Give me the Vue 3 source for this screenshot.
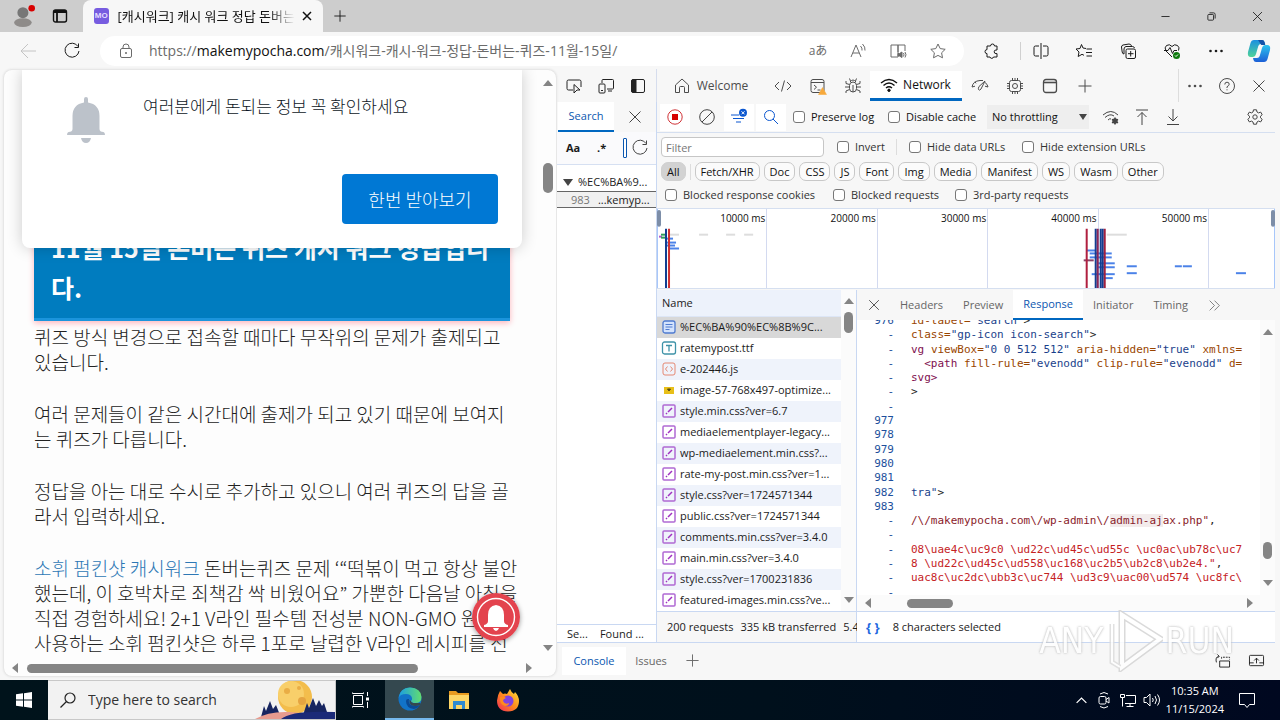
<script setup>
const icons = {
  back: '<path d="M16 8H1M8 1L1 8l7 7"/>',
  reload: '<path d="M14 3.5A7 7 0 1 0 15 8M14.500 .5v4h-4"/>',
  lock: '<rect x="2.500" y="5.500" width="11" height="9" rx="1.500"/><path d="M5 5.500V4a3 3 0 0 1 6 0v1.500"/><circle cx="8" cy="10" r=".6" fill="currentColor"/>',
  read: '<path d="M1 14L6 2l5 12M2.800 10h6.400M10.500 3q2 2 1.500 4.500M12.500 1q3 3 2.500 6.500"/>',
  book: '<path d="M8 2v12H1V2h7v7M8 2h7v6"/><path d="M8 10.500h1.500L12 9v5.500L9.500 13H8z" fill="currentColor"/><path d="M13.500 10q1 1.700 0 3.500M15 9q2 2.700 0 5.500"/>',
  star: '<path d="M8 1l2.200 4.600 5 .7-3.600 3.500.9 5L8 12.400l-4.500 2.400.9-5L.8 6.300l5-.7z"/>',
  puzzle: '<path d="M5 3h1.500a2 2 0 0 1 4 0H13v4h-1a1.800 1.800 0 0 0 0 3.600h1V14h-3.500a1.800 1.800 0 0 1-3.500 0H3v-3.400a2 2 0 0 1 0-4V3z"/>',
  split: '<path d="M8 0v16M6 3H2.500Q1 3 1 4.500v7Q1 13 2.500 13H6M10 3h3.500Q15 3 15 4.500v7q0 1.500-1.500 1.500H10"/>',
  favs: '<path d="M10 5.500L7 5 5.500 1.500 4 5.500l-4 .5 3 3-.8 4.500L6 11.300l2 1M10.500 6H16M10 9.500h6M10.500 13H16"/>',
  collect: '<rect x="6" y="6" width="9.500" height="9.500" rx="1.500"/><path d="M10.700 8v5.500M8 10.700h5.500M4 11Q2.500 11 2.200 9L1.500 4Q1.500 2.500 3 2l6-1q2 0 2.500 2M4 11V6q0-2 2-2.500h6.500q1.500 0 2 1.500"/>',
  heart: '<path d="M8 14L2 8Q0 4.500 2.500 2.500 5.500.5 8 3.500 10.500.5 13.500 2.500 16 4.500 14.500 7.500M0 7.500h4L6 4.500l2.500 6L10 7.500h3"/><circle cx="12.500" cy="12.500" r="3.500" fill="#0f7b0f" stroke="none"/><path d="M11 12.500l1 1 2-2" stroke="#fff"/>',
  dots: '<g fill="currentColor" stroke="none"><circle cx="2.500" cy="8" r="1.300"/><circle cx="8" cy="8" r="1.300"/><circle cx="13.500" cy="8" r="1.300"/></g>',
  min: '<path d="M3 8h10"/>',
  restore: '<rect x="3.500" y="5.500" width="7" height="7" rx="1"/><path d="M5.500 3.500h5q2 0 2 2v5"/>',
  close: '<path d="M2.500 2.500l11 11M13.500 2.500l-11 11"/>',
  smallClose: '<path d="M4 4l8 8M12 4l-8 8" stroke-width="1.500"/>',
  plus: '<path d="M8 1.500v13M1.500 8h13"/>',
  tabs: '<rect x="1.500" y="2" width="13" height="12" rx="2" stroke-width="1.400"/><path d="M2 4h12M3 3h10M5 4v10" stroke-width="1.800"/>',
  inspect: '<path d="M7 12H2.500Q1 12 1 10.500v-7Q1 2 2.500 2h11Q15 2 15 3.500V9M8 6.500l6 5.500h-3L8 15z"/>',
  device: '<path d="M4 5V2.500Q4 1.500 5 1.500h9.500q1 0 1 1V10q0 1-1 1H9M10 13h4"/><rect x="1" y="6" width="6" height="9" rx="1"/><path d="M3 12.500h2"/>',
  dock: '<rect x="1.500" y="1.500" width="13" height="13" rx="1.500"/><path d="M2 2h4v12H2z" fill="currentColor"/>',
  home: '<path d="M1.500 7L8 1l6.500 6v7.500h-4V9.500q0-1-1-1h-3q-1 0-1 1v5h-4z"/>',
  code: '<path d="M4 4L0 8 4 12M12 4l4 4-4 4M9.500 2.500l-3 11"/>',
  consoleIc: '<rect x="1" y="1.500" width="13" height="13" rx="2"/><path d="M1 4.500h13M4 7l2.500 2.200L4 11.500M7.500 12h3"/><path d="M12.500 9.500l4 7h-8z" fill="#f7a93b" stroke="#f7a93b" stroke-width=".5"/>',
  bug: '<rect x="4.500" y="4" width="7" height="10" rx="3.500"/><path d="M5 4q3-4 6 0M8 7v7M5.500 3L4.500.5M10.500 3l1-2.500M1 3v2.500l3.500 1M15 3v2.500l-3.500 1M0 9h4.500M11.500 9H16M1 15v-2l3.500-1.500M15 15v-2l-3.500-1.500"/>',
  wifi: '<path d="M0 6q8-7 16 0M2.500 8.500q5.500-5 11 0M5 11q3-2.500 6 0" stroke-width="1.400"/><circle cx="8" cy="13.300" r="1.200" fill="currentColor"/>',
  gauge: '<path d="M0 9Q1 3 8 2.500h3M13 4.500Q15.500 6 16 9M0 9l3-.8M16 9l-3-.8M3 3.800l1 1.500M13 3L9 11q-1.500 2-2.500.5-.5-1 .5-3z"/>',
  chip: '<rect x="2.500" y="2.500" width="11" height="11" rx="2"/><circle cx="8" cy="8" r="2.500"/><path d="M5.500 2.500V0M8 2.500V0M10.500 2.500V0M5.500 16v-2.500M8 16v-2.500M10.500 16v-2.500M2.500 5.500H0M2.500 8H0M2.500 10.500H0M16 5.500h-2.500M16 8h-2.500M16 10.500h-2.500"/>',
  app: '<rect x="1.500" y="1.500" width="13" height="13" rx="2.500" stroke-width="1.300"/><path d="M1.500 4.500h13" stroke-width="1.600"/>',
  help: '<circle cx="8" cy="8" r="7.500"/><path d="M5.800 6.500q0-2.300 2.200-2.300t2.200 2Q10.200 7.500 8 8.800V10M8 11.300v1"/>',
  record: '<circle cx="8" cy="8" r="7.200" stroke="#d13438"/><rect x="5" y="5" width="6" height="6" fill="#d60000" stroke="none"/>',
  clear: '<circle cx="8" cy="8" r="7.300"/><path d="M13 3L3 13"/>',
  filter: '<path d="M0 6h8M2 9.500h11M5 13h5"/><circle cx="12" cy="3.800" r="4" fill="#0b57d0" stroke="none"/><path d="M10.500 2.300l3 3M13.500 2.300l-3 3" stroke="#fff"/>',
  search: '<circle cx="6.500" cy="6.500" r="5"/><path d="M10 10l5 5"/>',
  wifiGear: '<path d="M0 6q8-7 15 0M2 8.500q5-4.500 9-1.500M5 11q2-2 3-1"/><path d="M12 8.500v7M9 10.300l6 3.500M15 10.300l-6 3.500" stroke-width="1.500"/><circle cx="12" cy="12" r="2" stroke-width="1.300"/>',
  upload: '<path d="M2 1h12M8 16V3.500M3.500 8L8 3.500 12.500 8"/>',
  download: '<path d="M2 15.500h12M8 0v12M3.500 7.500L8 12l4.500-4.500"/>',
  gear: '<circle cx="8" cy="8" r="2.200"/><path d="M6.500.8h3l.5 2.200 1.500.9 2.200-.8 1.500 2.600L13.500 7.200v1.600l1.700 1.500-1.500 2.600-2.200-.8-1.500.9-.5 2.200h-3L6 13l-1.500-.9-2.200.8L.8 10.300 2.500 8.800V7.200L.8 5.700l1.500-2.600 2.200.8L6 3z"/>',
  more: '<path d="M2 2l6 6-6 6M8 2l6 6-6 6"/>',
  dockSwap: '<path d="M5 8.500h10.500v6.500H5z"/><path d="M7 6V4.500h8.500V7" stroke-dasharray="2 1"/><path d="M4 3.500Q0 4.500 1.500 10M2.500 1.500l2 2-2 2"/>',
  expand: '<rect x="0.500" y="2.500" width="15" height="11" rx="1"/><path d="M0 10.500h5M11 10.500h5M8 11V5.500M5.500 8L8 5.500 10.500 8"/>',
  doc: '<rect x="2" y="2" width="12" height="12" rx="2" fill="#d3e3fd" stroke="#4f7bd0" stroke-width="1.300"/><path d="M4.500 5.500h7M4.500 8h7M4.500 10.500h4" stroke="#4f7bd0"/>',
  font: '<rect x="1.500" y="2" width="13" height="12" rx="2" stroke="#3f93a8" stroke-width="1.300"/><path d="M5 5.500h6M8 5.500v6" stroke="#3f93a8" stroke-width="1.300"/>',
  js: '<rect x="2" y="2" width="12" height="12" rx="2" stroke="#e58872"/><path d="M6.500 5.500L4.500 8l2 2.500M9.500 5.500l2 2.500-2 2.500" stroke="#e58872"/>',
  img: '<rect x="3" y="5" width="10" height="7" fill="#e8bf18" stroke="none"/><path d="M6.500 7h3l-1.500 2z" fill="#594b12" stroke="#594b12"/>',
  css: '<rect x="2" y="2" width="12" height="12" rx="1" stroke="#b06ad4" stroke-width="1.500"/><path d="M5 11l1-1M7 9l4-4" stroke="#a030c0" stroke-width="1.500"/>',
}

const browserTools = ['split', 'favs', 'collect', 'heart', 'dots']
const toolTabs = ['gauge', 'chip', 'app', 'plus']
const paragraphs = [
  ['퀴즈 방식 변경으로 접속할 때마다 무작위의 문제가 출제되고', '있습니다.'],
  ['여러 문제들이 같은 시간대에 출제가 되고 있기 때문에 보여지', '는 퀴즈가 다릅니다.'],
  ['정답을 아는 대로 수시로 추가하고 있으니 여러 퀴즈의 답을 골', '라서 입력하세요.'],
]
const chips = ['Fetch/XHR', 'Doc', 'CSS', 'JS', 'Font', 'Img', 'Media', 'Manifest', 'WS', 'Wasm', 'Other']
const ticks = ['10000 ms', '20000 ms', '30000 ms', '40000 ms', '50000 ms']
const files = [
  ['doc', '%EC%BA%90%EC%8B%9C...'],
  ['font', 'ratemypost.ttf'],
  ['js', 'e-202446.js'],
  ['img', 'image-57-768x497-optimize...'],
  ['css', 'style.min.css?ver=6.7'],
  ['css', 'mediaelementplayer-legacy...'],
  ['css', 'wp-mediaelement.min.css?...'],
  ['css', 'rate-my-post.min.css?ver=1...'],
  ['css', 'style.css?ver=1724571344'],
  ['css', 'public.css?ver=1724571344'],
  ['css', 'comments.min.css?ver=3.4.0'],
  ['css', 'main.min.css?ver=3.4.0'],
  ['css', 'style.css?ver=1700231836'],
  ['css', 'featured-images.min.css?ve...'],
]
const code = [
  ['976', ['id-label=', 'a'], ['"search"', 's'], ['>', 'p']],
  ['-', ['class=', 'a'], ['"gp-icon icon-search"', 's'], ['>', 'p']],
  ['-', ['vg ', 't'], ['viewBox=', 'a'], ['"0 0 512 512" ', 's'], ['aria-hidden=', 'a'], ['"true" ', 's'], ['xmlns=', 'a']],
  ['-', ['  <path ', 't'], ['fill-rule=', 'a'], ['"evenodd" ', 's'], ['clip-rule=', 'a'], ['"evenodd" ', 's'], ['d=', 'a']],
  ['-', ['svg>', 't']],
  ['-', ['>', 'p']],
  ['-'],
  ['977'], ['978'], ['979'], ['980'], ['981'],
  ['982', ['tra"', 's'], ['>', 'p']],
  ['983'],
  ['-', ['/\\/makemypocha.com\\/wp-admin\\/', 'm'], ['admin-aj', 'm hit'], ['ax.php"', 'm'], [',', 'p']],
  ['-'],
  ['-', ['08\\uae4c\\uc9c0 \\ud22c\\ud45c\\ud55c \\uc0ac\\ub78c\\uc7', 'r']],
  ['-', ['8 \\ud22c\\ud45c\\ud558\\uc168\\uc2b5\\ub2c8\\ub2e4."', 'r'], [',', 'p']],
  ['-', ['uac8c\\uc2dc\\ubb3c\\uc744 \\ud3c9\\uac00\\ud574 \\uc8fc\\', 'r']],
  ['-'],
]
code[14] = ['-', ['/\\/makemypocha.com\\/wp-admin\\/', 'm'], ['admin-aj', 'm hit'], ['ax.php"', 'm'], [',', 'p']]
// x, y, width, colour of each request bar in the overview
const bars = [
  [2, 27, 3, '#b05bd0'], [4, 25, 4, '#2e9e5b'], [4, 28, 4, '#2e9e5b'], [12, 25, 10, '#ddd'], [9, 29, 7, '#4b82e8'], [10, 33, 9, '#4b82e8'], [8, 36, 10, '#4b82e8'], [12, 39, 10, '#4b82e8'],
  [42, 25, 9, '#ddd'], [69, 25, 9, '#ddd'], [87, 25, 9, '#ddd'], [449, 25, 20, '#ddd'],
  [429, 41, 9, '#4b82e8'], [432, 44, 22, '#4b82e8'], [432, 48, 22, '#4b82e8'], [426, 51, 10, '#8a4468'], [440, 54, 17, '#4b82e8'], [440, 58, 17, '#4b82e8'],
  [434, 65, 23, '#4b82e8'], [446, 69, 9, '#4b82e8'], [469, 57, 10, '#4b82e8'], [469, 64, 10, '#4b82e8'], [517, 57, 7, '#4b82e8'], [525, 57, 9, '#4b82e8'], [578, 64, 10, '#4b82e8'],
]
const marks = [[9, '#123e91'], [12, '#d03030'], [429, '#b02040'], [438, '#123e91'], [440, '#8b2556'], [443, '#123e91'], [445, '#123e91'], [447, '#a02040']]
</script>

<template>
  <div class="desktop">
    <header class="tabstrip">
      <button class="ib profile" aria-label="Profile">
        <svg class="ic20" viewBox="0 0 20 20"><circle cx="9" cy="7" r="5" fill="#777" /><ellipse cx="9" cy="16" rx="8" ry="4" fill="#8e8b89" /><circle cx="17" cy="3" r="3" fill="#d80000" /></svg>
      </button>
      <button class="ib tabact" aria-label="Tab actions"><svg class="ic" viewBox="0 0 16 16" v-html="icons.tabs"></svg></button>
      <div class="tab">
        <span class="favicon">MO</span>
        <span class="tabtitle">[캐시워크] 캐시 워크 정답 돈버는</span>
        <button class="ib" aria-label="Close tab"><svg class="ic" viewBox="0 0 16 16" v-html="icons.smallClose"></svg></button>
      </div>
      <button class="ib newtab" aria-label="New tab"><svg class="ic" viewBox="0 0 16 16" v-html="icons.plus"></svg></button>
      <div class="winbtns">
        <button class="ib" aria-label="Minimize"><svg class="ic" viewBox="0 0 16 16" v-html="icons.min"></svg></button>
        <button class="ib" aria-label="Restore"><svg class="ic" viewBox="0 0 16 16" v-html="icons.restore"></svg></button>
        <button class="ib" aria-label="Close"><svg class="ic" viewBox="0 0 16 16" v-html="icons.close"></svg></button>
      </div>
    </header>

    <nav class="toolbar">
      <button class="ib nav dim" aria-label="Back"><svg class="ic" viewBox="0 0 16 16" v-html="icons.back"></svg></button>
      <button class="ib nav" aria-label="Reload"><svg class="ic" viewBox="0 0 16 16" v-html="icons.reload"></svg></button>
      <div class="address">
        <svg class="ic" viewBox="0 0 16 16" v-html="icons.lock"></svg>
        <span class="url">https://<b>makemypocha.com</b>/캐시워크-캐시-워크-정답-돈버는-퀴즈-11월-15일/</span>
        <button class="ib lang" aria-label="Translate">aあ</button>
        <button v-for="n in ['read', 'book', 'star']" :key="n" class="ib" :aria-label="n"><svg class="ic" viewBox="0 0 16 16" v-html="icons[n]"></svg></button>
      </div>
      <button class="ib puzzle" aria-label="Extensions"><svg class="ic" viewBox="0 0 16 16" v-html="icons.puzzle"></svg></button>
      <button v-for="n in browserTools" :key="n" class="ib tool" :aria-label="n"><svg class="ic" viewBox="0 0 16 16" v-html="icons[n]"></svg></button>
      <button class="ib copilot" aria-label="Copilot">
        <svg viewBox="0 0 24 24">
          <defs>
            <linearGradient id="cpA" x1="0" y1="0" x2="0" y2="1"><stop offset="0" stop-color="#1b8fe0" /><stop offset="1" stop-color="#4fd39a" /></linearGradient>
            <linearGradient id="cpB" x1="0" y1="0" x2="0" y2="1"><stop offset="0" stop-color="#2cc3ee" /><stop offset="1" stop-color="#1c5fd6" /></linearGradient>
          </defs>
          <path d="M7 1h8q2 0 2.500 2l.7 2H14q-2 0-2.700 2L9 15q-.8 3-3.500 3H4q-4 0-3-5L3.500 4Q4.300 1 7 1z" fill="url(#cpA)" />
          <path d="M17 23H9q-2 0-2.500-2L6 19h4q2 0 2.700-2L15 9q.8-3 3.500-3H20q4 0 3 5l-2.500 9Q19.700 23 17 23z" fill="url(#cpB)" />
          <path d="M11 1h4q2 0 2.500 2l.8 3h-4z" fill="#1553a8" />
        </svg>
      </button>
    </nav>

    <main class="work">
      <section class="page">
        <div class="viewport">
          <article class="post">
            <h2>11월 15일 돈버는 퀴즈 캐시 워크 정답입니<br />다.</h2>
            <p v-for="(p, i) in paragraphs" :key="i"><template v-for="l in p" :key="l">{{ l }}<br /></template></p>
            <p><a href="#">소휘 펌킨샷 캐시워크</a> 돈버는퀴즈 문제 ‘“떡볶이 먹고 항상 불안<br />했는데, 이 호박차로 죄책감 싹 비웠어요” 가뿐한 다음날 아침을<br />직접 경험하세요! 2+1 V라인 필수템 전성분 NON-GMO 원<br />사용하는 소휘 펌킨샷은 하루 1포로 날렵한 V라인 레시피를 선</p>
          </article>
          <div class="popup">
            <svg class="bell" viewBox="0 0 38 46"><path d="M19 0q2 0 2 2v3.500q11.500 2 11.500 13.500v13q0 3 4 3 1.500.500 1.500 3H0q0-2.500 1.500-3 4 0 4-3V19Q5.500 7.500 17 5.500V2q0-2 2-2z" fill="#bcc2ca" /><path d="M14 41h10q-1 5-5 5t-5-5z" fill="#bcc2ca" /></svg>
            <div class="popbody">
              <span>여러분에게 돈되는 정보 꼭 확인하세요</span>
              <button class="accept">한번 받아보기</button>
            </div>
          </div>
          <button class="redbell" aria-label="Notifications">
            <svg viewBox="0 0 48 48"><circle cx="24" cy="24" r="24" fill="#e3434e" /><circle cx="24" cy="24" r="18.500" fill="none" stroke="#fff" stroke-width="1.400" /><path d="M24 12q8 1 8 10v6q0 3 4 4v2H12v-2q4-1 4-4v-6q0-9 8-10z" fill="#fff" /><path d="M21 35h6q-1 3-3 3t-3-3z" fill="#fff" /></svg>
          </button>
        </div>
        <div class="vbar"><i class="up"></i><i class="vthumb"></i><i class="down"></i></div>
        <div class="hbar"><i class="lt"></i><i class="track"><i class="hthumb"></i></i><i class="rt"></i></div>
      </section>

      <section class="dev">
        <div class="devtabs">
          <div class="devleft">
            <button v-for="n in ['inspect', 'device', 'dock']" :key="n" class="ib" :aria-label="n"><svg class="ic" viewBox="0 0 16 16" v-html="icons[n]"></svg></button>
          </div>
          <button class="ib welcome"><svg class="ic" viewBox="0 0 16 16" v-html="icons.home"></svg>Welcome</button>
          <button v-for="n in ['code', 'consoleIc', 'bug']" :key="n" class="ib slot35" :aria-label="n"><svg class="ic" viewBox="0 0 16 16" v-html="icons[n]"></svg></button>
          <button class="ib network"><svg class="ic" viewBox="0 0 16 16" v-html="icons.wifi"></svg>Network</button>
          <button v-for="n in toolTabs" :key="n" class="ib slot35" :aria-label="n"><svg class="ic" viewBox="0 0 16 16" v-html="icons[n]"></svg></button>
          <div class="devright">
            <button v-for="n in ['dots', 'help', 'close']" :key="n" class="ib" :aria-label="n"><svg class="ic" viewBox="0 0 16 16" v-html="icons[n]"></svg></button>
          </div>
        </div>

        <div class="devmain">
          <aside class="side">
            <div class="sidetop"><button class="ib stab">Search</button><button class="ib sclose" aria-label="Close search"><svg class="ic" viewBox="0 0 16 16" v-html="icons.close"></svg></button></div>
            <div class="sideopts"><b>Aa</b><b>.*</b><span class="sgroup"><input class="sinput" aria-label="Search query" /><svg class="ic" viewBox="0 0 16 16" v-html="icons.reload"></svg></span></div>
            <div class="results">
              <div class="res"><i class="tri"></i><span>%EC%BA%9...</span></div>
              <div class="res hitrow"><em>983</em><span>...kemyp...</span></div>
            </div>
            <div class="sidefoot"><span>Se...</span><span>Found ...</span></div>
          </aside>

          <div class="net">
            <div class="nettools">
              <button v-for="n in ['record', 'clear', 'filter', 'search']" :key="n" class="ib slot32" :class="n" :aria-label="n"><svg class="ic" viewBox="0 0 16 16" v-html="icons[n]"></svg></button>
              <label class="ck w95 first"><input type="checkbox" />Preserve log</label>
              <label class="ck w95"><input type="checkbox" />Disable cache</label>
              <div class="throttle"><select aria-label="Throttling"><option>No throttling</option></select><i class="tri"></i></div>
              <button v-for="n in ['wifiGear', 'upload', 'download']" :key="n" class="ib slot31" :aria-label="n"><svg class="ic" viewBox="0 0 16 16" v-html="icons[n]"></svg></button>
              <button class="ib gear" aria-label="Settings"><svg class="ic" viewBox="0 0 16 16" v-html="icons.gear"></svg></button>
            </div>
            <div class="filters">
              <input class="finput" placeholder="Filter" aria-label="Filter" />
              <label class="ck inv"><input type="checkbox" />Invert</label>
              <label class="ck hide"><input type="checkbox" />Hide data URLs</label>
              <label class="ck"><input type="checkbox" />Hide extension URLs</label>
            </div>
            <div class="chips"><button class="chip all">All</button><i class="sep"></i><button v-for="c in chips" :key="c" class="chip">{{ c }}</button></div>
            <div class="blocked">
              <label class="ck b1"><input type="checkbox" />Blocked response cookies</label>
              <label class="ck b2"><input type="checkbox" />Blocked requests</label>
              <label class="ck"><input type="checkbox" />3rd-party requests</label>
            </div>
            <div class="overview">
              <span v-for="t in ticks" :key="t" class="tick">{{ t }}</span><span class="tick last"></span>
              <svg class="graph" viewBox="0 0 617 80" preserveAspectRatio="none">
                <rect v-for="(b, i) in bars" :key="i" :x="b[0]" :y="b[1]" :width="b[2]" height="2" :fill="b[3]" />
                <rect v-for="(m, i) in marks" :key="'m' + i" :x="m[0] - 1" y="20" width="2" height="60" :fill="m[1]" />
                <rect x="0" y="0" width="1" height="80" fill="#a8c7fa" /><rect x="616" y="0" width="1" height="80" fill="#a8c7fa" />
                <rect x="0" y="1" width="4" height="17" rx="2" fill="#7d8ea8" /><rect x="613" y="1" width="4" height="17" rx="2" fill="#7d8ea8" />
              </svg>
            </div>

            <div class="panes">
              <div class="names">
                <div class="namebody">
                  <table>
                    <thead><tr><th>Name</th></tr></thead>
                    <tbody><tr v-for="(f, i) in files" :key="i" :class="{ sel: i === 0 }"><td><svg class="ic" viewBox="0 0 16 16" v-html="icons[f[0]]"></svg><span>{{ f[1] }}</span></td></tr></tbody>
                  </table>
                  <div class="nbar"><i class="up"></i><i class="nthumb"></i><i class="down"></i></div>
                </div>
                <div class="nstatus"><span>200 requests</span><span>335 kB transferred</span><span>5.4</span></div>
              </div>
              <div class="detail">
                <div class="dtabs">
                  <button class="ib dclose" aria-label="Close details"><svg class="ic" viewBox="0 0 16 16" v-html="icons.close"></svg></button>
                  <button v-for="t in ['Headers', 'Preview', 'Response', 'Initiator', 'Timing']" :key="t" class="ib dtab" :class="{ on: t === 'Response' }">{{ t }}</button>
                  <button class="ib dmore" aria-label="More tabs"><svg class="ic14" viewBox="0 0 16 16" v-html="icons.more"></svg></button>
                </div>
                <div class="codewrap">
                  <div class="code">
                    <div v-for="(l, i) in code" :key="i" class="line"><span class="ln">{{ l[0] }}</span><span class="src"><span v-for="(s, j) in l.slice(1)" :key="j" :class="s[1]">{{ s[0] }}</span></span></div>
                  </div>
                  <div class="cbar"><i class="up"></i><i class="cthumb"></i><i class="down"></i></div>
                </div>
                <div class="chbar"><i class="lt"></i><i class="chthumb"></i><i class="rt"></i></div>
                <div class="dstatus"><b>{ }</b><span>8 characters selected</span></div>
              </div>
            </div>
          </div>
        </div>

        <div class="drawer">
          <button class="ib con">Console</button><button class="ib iss">Issues</button>
          <button class="ib" aria-label="More tools"><svg class="ic" viewBox="0 0 16 16" v-html="icons.plus"></svg></button>
          <div class="drawerend">
            <button v-for="n in ['dockSwap', 'expand']" :key="n" class="ib" :aria-label="n"><svg class="ic" viewBox="0 0 16 16" v-html="icons[n]"></svg></button>
          </div>
        </div>
      </section>
    </main>

    <footer class="taskbar">
      <button class="ib start" aria-label="Start"><svg class="ic" viewBox="0 0 16 16"><path d="M0 2.300L7 1.300v6.200H0zM8 1.200L16 0v7.500H8zM0 8.500h7v6.200l-7-1zM8 8.500h8V16l-8-1.200z" fill="#fff" stroke="none" /></svg></button>
      <div class="tsearch">
        <svg class="mag" viewBox="0 0 16 16"><circle cx="10" cy="6" r="5" /><path d="M6.500 9.500L.5 15.500" /></svg>
        <input placeholder="Type here to search" aria-label="Type here to search" />
        <svg class="moon" viewBox="0 0 80 38">
          <circle cx="40" cy="16" r="17" fill="#f3bd4c" /><circle cx="36" cy="13" r="13" fill="#f8cf6a" /><circle cx="32" cy="10" r="3" fill="#e9ad45" /><circle cx="47" cy="20" r="4" fill="#e5a441" /><circle cx="44" cy="7" r="2" fill="#e9ad45" />
          <path d="M6 36l3-11 2 5 4-10 3 8 3-4 4 10v4zM48 34l4-12 2 5 4-10 3 8 3-6 3 6 2-3 4 12z" fill="#172560" />
          <path d="M0 38q14-8 34-7l12 1-6 6z" fill="#e79b8f" /><path d="M26 38q10-9 54-7v7z" fill="#1b2a78" />
        </svg>
      </div>
      <button class="ib task" aria-label="Task view"><svg class="ic20 white" viewBox="0 0 20 20"><path d="M2.500 5.500h9v9h-9zM1.500 2.500v1h11v-1M1.500 17.500v-1h11v1M16.500 2v4M16.500 12v6" /><rect x="15" y="7.500" width="3" height="3" fill="#fff" stroke="none" /></svg></button>
      <button class="ib task edge" aria-label="Edge">
        <svg class="ic24" viewBox="0 0 24 24">
          <defs><linearGradient id="eg" x1="0" x2="1" y1="0" y2="0"><stop offset="0" stop-color="#1b9de2" /><stop offset="1" stop-color="#62dd70" /></linearGradient></defs>
          <circle cx="12" cy="12" r="11.500" fill="#1273c8" />
          <path d="M.6 11Q2 .5 12 .5 23 1 23.500 10q0 6-6 6-4 0-4.500-2 1.500-1 1-3Q13 7 8 7 2 7 .6 11z" fill="url(#eg)" />
          <path d="M8 14q0 7 8 8 4-.500 6-4-5 2-9 0-3-2-2-6-3-.500-3 2z" fill="#0b4a94" />
          <path d="M13 14q0 2 4 2h5.500L22 18q-5 2-9 0-2-2-1.500-5z" fill="#34484f" />
        </svg>
      </button>
      <button class="ib task" aria-label="File Explorer"><svg class="ic24" viewBox="0 0 24 24"><path d="M2 3h7l2 2h11v4H2z" fill="#e89b20" /><path d="M2 7h20v14H2z" fill="#fdd666" /><path d="M6 21v-8h12v8h-3v-4H9v4z" fill="#2f8ad0" /></svg></button>
      <button class="ib task" aria-label="Firefox">
        <svg class="ic24" viewBox="0 0 24 24">
          <defs><linearGradient id="ff" x1="1" y1="0" x2="0" y2="1"><stop offset="0" stop-color="#ffe63c" /><stop offset=".5" stop-color="#ff8a1d" /><stop offset="1" stop-color="#f0265c" /></linearGradient></defs>
          <path d="M4 3l3 3q2-1 4 0l3-5q1 3 4 5l1-2q4 4 4 9 0 10-11 10.500Q1 23 1 12.500 1.500 7 4 3z" fill="url(#ff)" /><circle cx="12" cy="13" r="5.500" fill="#8143e0" /><path d="M4 9q4-1 6 1-3 1-3 3 2 4 6 2 0 3-4 3-6-2-5-9z" fill="#ff8a1d" />
        </svg>
      </button>
      <div class="tray">
        <svg class="ic14 white" viewBox="0 0 16 16"><path d="M2 11l6-6 6 6" stroke-width="1.500" /></svg>
        <svg class="ic white" viewBox="0 0 16 16"><rect x="3" y="4.500" width="7" height="7.500" rx="1.500" /><path d="M10 7.500l3-2v5.500l-3-2M4 2q4-3 8 0M4 14.500q4 3 8 0" /></svg>
        <svg class="ic white" viewBox="0 0 16 16"><path d="M6 3.500h9.500v8H5M10 11.500v3M6.500 14.500h7M.5 2.500h4v3h-4zM2.500 5.500v9" /></svg>
        <svg class="ic white" viewBox="0 0 16 16"><path d="M0 5.500h2.500L6 2v12l-3.500-3.500H0zM8.500 6q1.500 2 0 4M11 4q3 4 0 8M13.500 2.500q4 5.500 0 11" /></svg>
        <div class="clock"><span>10:35 AM</span><span>11/15/2024</span></div>
        <svg class="ic20 white" viewBox="0 0 20 20"><path d="M2.500 3.500h15v11h-5l-2.500 3-2.500-3h-5z" /></svg>
      </div>
    </footer>

    <div class="watermark" aria-hidden="true">
      <span>ANY</span>
      <svg viewBox="0 0 56 62"><path d="M15 5l38 24-38 28z" fill="none" stroke="#d4d4d4" stroke-width="7" /><path d="M15 5l38 24-38 28z" fill="none" stroke="#fff" stroke-width="4" /><path d="M5 14v38l8 5" fill="none" stroke="#dcdcdc" stroke-width="5" /><path d="M5 14v38l8 5" fill="none" stroke="#fff" stroke-width="2" /></svg>
      <span>RUN</span>
    </div>
  </div>
</template>

<style>
body { margin: 0; }
</style>

<style scoped>
* { box-sizing: border-box; }
.desktop { position: relative; display: flex; flex-direction: column; height: 100vh; overflow: hidden; background: #f7f7f7; color: #1b1b1b; font: 11px/16px "Open Sans", "Noto Sans CJK KR", sans-serif; }
.ib { display: flex; align-items: center; justify-content: center; flex: none; border: 0; padding: 0; margin: 0; background: none; color: inherit; font: inherit; }
svg { display: block; flex: none; }
.ic, .ic14, .ic20, .mag { width: 16px; height: 16px; fill: none; stroke: currentColor; stroke-width: 1; overflow: visible; }
.ic14 { width: 13px; height: 13px; }
.ic20 { width: 20px; height: 20px; }
.ic24 { width: 24px; height: 24px; }
.white { stroke: #fff; }
i { font-style: normal; }

.tabstrip { display: flex; flex: none; height: 32px; background: #cdcdcd; color: #111; }
.profile { width: 44px; }
.profile .ic20 { width: 22px; height: 22px; stroke: none; margin-left: 3px; }
.tabact { width: 32px; margin-right: 7px; }
.tab { display: flex; align-items: center; width: 240px; padding-left: 11px; background: #f7f7f7; border-radius: 8px 8px 0 0; }
.favicon { width: 16px; height: 16px; border-radius: 3px; background: #775ce0; color: #e4dcff; font: bold 8px/16px "Liberation Sans", sans-serif; text-align: center; }
.tabtitle { flex: 1; margin: 0 4px 0 9px; font-size: 13px; line-height: 20px; white-space: nowrap; mask-image: linear-gradient(90deg, #000 85%, transparent); }
.tab .ib { width: 16px; margin-right: 8px; }
.newtab { width: 34px; }
.newtab .ic { width: 14px; height: 14px; }
.winbtns { display: flex; margin-left: auto; }
.winbtns .ib { width: 46px; }
.winbtns .ic { width: 13px; height: 13px; }

.toolbar { display: flex; align-items: center; flex: none; height: 37px; padding-left: 6px; }
.nav { width: 44px; }
.nav.dim { color: #c4c4c4; }
.address { display: flex; align-items: center; flex: 1; height: 30px; margin-left: 6px; padding: 0 6px 0 18px; border-radius: 15px; background: #fff; color: #6b6b6b; }
.url { flex: 1; margin-left: 15px; font-size: 14px; line-height: 22px; white-space: nowrap; }
.url b { font-weight: 400; color: #111; }
.address .ib { width: 40px; }
.address .lang { font-size: 12px; }
.puzzle { width: 56px; border-right: 1px solid transparent; }
.tool { width: 44px; }
.puzzle + .tool { width: 40px; border-left: 1px solid #d0d0d0; height: 18px; margin-right: 2px; }
.copilot { width: 42px; }
.copilot svg { width: 24px; height: 24px; }

.work { display: flex; flex: 1; min-height: 0; }
.page { display: grid; grid-template: minmax(0, 1fr) 16px / minmax(0, 1fr) 16px; flex: 552 1 0; min-width: 0; margin: 1px 0 4px 4px; border-radius: 8px; background: #fdfdfd; box-shadow: 0 0 3px #c8c8c8; overflow: hidden; }
.viewport { position: relative; min-width: 0; margin-bottom: 8px; overflow: hidden; }
.post { padding: 145px 30px 0; color: #222; font-family: "Noto Sans CJK KR", sans-serif; font-size: 19px; font-weight: 300; line-height: 25px; white-space: nowrap; }
.post h2 { margin: 0 0 3px; padding: 12px 17px 11px; background: #007cbf; border-bottom: 3px solid #1b94dc; box-shadow: 0 2px 6px #ffb3bb; color: #fff; font-size: 25px; font-weight: 700; line-height: 40px; }
.post p { margin: 0 0 27px; }
.post a { color: #2d78b5; text-decoration: none; }
.popup { position: absolute; top: 0; left: 18px; right: 18px; display: flex; height: 178px; padding: 27px 24px 24px 45px; border-radius: 0 0 8px 8px; background: #fff; box-shadow: 0 0 16px #0003; }
.bell { width: 38px; height: 46px; }
.popbody { display: flex; flex: 1; flex-direction: column; justify-content: space-between; margin-left: 38px; color: #0c1524; font: 300 17px/18px "Noto Sans CJK KR", sans-serif; }
.accept { align-self: flex-end; width: 156px; height: 50px; border: 0; border-radius: 4px; background: #0078d4; color: #fff; font: 300 18px/24px "Noto Sans CJK KR", sans-serif; }
.redbell { position: absolute; right: 20px; bottom: 11px; width: 48px; height: 48px; padding: 0; border: 0; border-radius: 50%; background: none; box-shadow: 0 1px 5px #0006; }

.up, .down, .lt, .rt, .tri { flex: none; width: 0; height: 0; border: 5px solid transparent; }
.up { border-top: 0; border-bottom: 6px solid #858585; }
.down { border-bottom: 0; border-top: 6px solid #858585; }
.lt { border-left: 0; border-right: 6px solid #858585; }
.rt { border-right: 0; border-left: 6px solid #858585; }
.tri { border-bottom: 0; border-top: 7px solid #444; }
.vbar { display: flex; flex-direction: column; align-items: center; padding: 10px 0 25px; margin-bottom: -16px; }
.vthumb { width: 10px; height: 30px; margin: 77px 0 auto; border-radius: 5px; background: #858585; }
.hbar { display: flex; align-items: center; padding: 0 8px; }
.track { flex: 1; margin: 0 4px 0 9px; }
.hthumb { display: block; width: 79%; height: 9px; border-radius: 5px; background: #858585; }

.dev { display: flex; flex: 718 1 0; flex-direction: column; min-width: 0; margin-left: 1px; padding-right: 5px; }
.devtabs { display: flex; flex: none; height: 33px; color: #4c4c4c; font-size: 12px; }
.devleft { display: flex; width: 100px; padding-left: 1px; border-right: 1px solid #d6dded; }
.devleft .ib { width: 32px; color: #222; }
.welcome { width: 108px; gap: 7px; }
.slot35 { width: 35px; }
.network { width: 92px; gap: 6px; margin-top: 2px; height: 30px; background: #fff; border-bottom: 3px solid #0067c0; color: #111; }
.devright { display: flex; margin-left: auto; border-left: 1px solid #ddd; }
.devright .ib { width: 32px; }
.devmain { display: flex; flex: 1; min-height: 0; border-bottom: 1px solid #c9d8f2; }
.side { display: flex; flex-direction: column; flex: none; width: 100px; border-right: 1px solid #c9d8f2; background: #fff; overflow: hidden; }
.sidetop { display: flex; height: 30px; background: #f7f7f7; }
.stab { width: 56px; margin-left: 1px; background: #fff; border-bottom: 2px solid #0067c0; color: #0b57b0; }
.sclose { flex: 1; color: #444; }
.sideopts { display: flex; align-items: center; justify-content: space-between; height: 33px; padding: 0 8px 0 9px; border-bottom: 1px solid #d6e0f2; background: #fafafc; }
.sgroup { display: flex; align-items: center; gap: 5px; color: #444; }
.sinput { width: 4px; height: 20px; padding: 0; border: 1px solid #0b57b0; border-radius: 1px; }
.results { flex: 1; padding-top: 8px; }
.res { display: flex; align-items: center; height: 18px; padding-left: 6px; white-space: nowrap; }
.res .tri { margin-right: 5px; border-width: 7px 5px 0; }
.hitrow { height: 17px; padding-left: 14px; gap: 8px; border: solid #666; border-width: 1px 0; background: #f1f1f1; }
.hitrow em { font-style: normal; color: #777; }
.sidefoot { display: flex; gap: 12px; height: 18px; padding: 1px 0 0 10px; border-top: 1px solid #c9d8f2; white-space: nowrap; }

.net { display: flex; flex: 1; flex-direction: column; min-width: 0; }
.nettools { display: flex; align-items: center; flex: none; height: 31px; padding-left: 2px; border-bottom: 1px solid #d5dff0; color: #444; }
.slot32 { width: 30px; margin: 0 1px; height: 27px; }
.record, .filter, .search { background: #fff; color: #0b57d0; }
.slot31 { width: 31px; }
.gear { margin-left: auto; width: 40px; }
.ck { display: flex; align-items: center; flex: none; white-space: nowrap; color: #333; }
.ck input { appearance: none; width: 12px; height: 12px; margin: 0 6px 0 0; border: 1px solid #777; border-radius: 3px; background: #fff; }
.w95 { width: 95px; color: #111; }
.first { margin-left: 6px; }
.throttle { display: flex; align-items: center; height: 24px; margin: 0 6px 0 4px; padding: 0 2px 0 5px; background: #eee; }
.throttle select { appearance: none; width: 83px; margin-right: 4px; padding: 0; border: 0; background: none; color: #111; font: inherit; }
.throttle .tri { border-width: 6px 4px 0; }
.filters { display: flex; align-items: center; flex: none; height: 28px; padding-left: 4px; }
.finput { width: 163px; height: 20px; margin-right: 13px; padding: 0 4px; border: 1px solid #c6c6c6; border-radius: 4px; background: #fff; font: inherit; }
.inv { width: 60px; border-right: 1px solid #ddd; margin-right: 12px; }
.hide { width: 113px; }
.chips { display: flex; flex: none; gap: 4px; height: 21px; padding: 1px 4px 0; }
.chip { height: 19px; padding: 0 5px; border: 1px solid #c8c8c8; border-radius: 7px; background: #fbfbfb; color: #111; font: 11px/16px "Open Sans", sans-serif; }
.all { border-color: #d0d0d0; background: #d2d2d2; }
.sep { width: 1px; margin: 2px 0; background: #ddd; }
.blocked { display: flex; align-items: center; flex: none; height: 26px; padding-left: 8px; }
.b1 { width: 168px; }
.b2 { width: 122px; }
.overview { position: relative; display: flex; flex: none; height: 81px; border: solid #d5dff0; border-width: 1px 0; background: #fff; }
.tick { flex: 110 1 0; padding: 1px 1px 0 0; border-right: 1px solid #d3daf0; color: #111; font-size: 10px; text-align: right; white-space: nowrap; }
.tick.last { flex: 66 1 0; border: 0; }
.graph { position: absolute; inset: 0; width: 100%; height: 100%; }

.panes { display: flex; flex: 1; min-height: 0; margin-top: 1px; }
.names { display: flex; flex-direction: column; flex: none; width: 200px; border-right: 1px solid #c9d8f2; }
.namebody { display: flex; flex: 1; min-height: 0; overflow: hidden; background: #fff; }
table { width: 184px; table-layout: fixed; border-collapse: collapse; }
th { height: 26px; padding: 0 5px; background: #edf2fb; font-weight: 400; text-align: left; border-bottom: 1px solid #dde6f6; }
td { display: flex; align-items: center; height: 21px; padding: 0 4px; white-space: nowrap; }
td .ic { margin-right: 3px; }
tbody tr:nth-child(odd) { background: #eff3fb; }
tbody tr.sel { background: #d8d8d8; }
.nbar { display: flex; flex-direction: column; align-items: center; width: 15px; padding: 8px 0; background: #fbfbfb; }
.nthumb { width: 9px; height: 21px; margin: 8px 0 auto; border-radius: 5px; background: #858585; }
.nstatus, .dstatus { display: flex; align-items: center; flex: none; height: 31px; border-top: 1px solid #c9d8f2; white-space: nowrap; }
.nstatus { gap: 7px; padding-left: 10px; }
.dstatus { gap: 13px; padding-left: 9px; background: #fff; }
.dstatus b { color: #1a66e0; font-size: 13px; }
.detail { display: flex; flex: 1; flex-direction: column; min-width: 0; }
.dtabs { display: flex; flex: none; height: 30px; color: #666; font-size: 11px; }
.dclose { width: 33px; color: #444; }
.dclose .ic { width: 14px; height: 14px; }
.dtab { padding: 0 10px; }
.dtab.on { background: #fff; border-bottom: 2px solid #0067c0; color: #0b57b0; }
.dmore { width: 32px; }
.codewrap { display: flex; flex: 1; min-height: 0; overflow: hidden; background: #fff; }
.code { flex: 1; min-width: 0; height: 0; margin-top: -6px; overflow: visible; font: 11px/1.3 "DejaVu Sans Mono", monospace; white-space: pre; }
.line { display: flex; }
.ln { flex: none; width: 37px; margin-right: 17px; color: #1d4f9c; text-align: right; }
.a { color: #994500; } .s { color: #1a3f8b; } .t { color: #80104f; } .p { color: #222; } .m { color: #8a1c2b; } .r { color: #c5221f; }
.hit { background: #f3ecec; }
.cbar { display: flex; flex-direction: column; align-items: center; flex: none; width: 15px; padding: 9px 0; background: #fbfbfb; }
.cthumb { width: 9px; height: 17px; margin: auto 0 21px; border-radius: 5px; background: #858585; }
.chbar { display: flex; align-items: center; flex: none; height: 16px; padding: 0 22px 0 8px; background: #fbfbfb; }
.chthumb { width: 46px; height: 9px; margin: 0 auto 0 36px; border-radius: 5px; background: #858585; }

.drawer { display: flex; align-items: center; flex: none; height: 37px; padding-bottom: 2px; color: #666; }
.con { width: 64px; height: 28px; margin-left: 5px; background: #fff; color: #0b57b0; }
.iss { width: 50px; margin-right: 9px; }
.drawer .ic { width: 15px; height: 15px; }
.drawerend { display: flex; margin-left: auto; padding-right: 2px; color: #222; }
.drawerend .ib { width: 34px; }

.taskbar { display: flex; flex: none; height: 40px; background: linear-gradient(90deg, #00131b, #00101c 60%, #000820); color: #fff; }
.start { width: 48px; }
.tsearch { display: flex; align-items: center; width: 288px; padding-left: 12px; background: #f2f2f2; border: 1px solid #c8c8c8; border-left: 0; color: #222; overflow: hidden; }
.mag { stroke: #222; stroke-width: 1.2; }
.tsearch input { flex: 1; min-width: 0; margin-left: 12px; padding: 0; border: 0; background: none; font: 14px/20px "Open Sans", sans-serif; }
.tsearch input::placeholder { color: #333; }
.finput::placeholder { color: #777; }
.moon { width: 80px; height: 38px; }
.task { width: 49px; }
.edge { background: #34484f; border-bottom: 2px solid #76b9ed; }
.tray { display: flex; align-items: center; gap: 8px; margin-left: auto; padding-right: 23px; }
.clock { display: flex; flex-direction: column; align-items: center; margin: 0 5px 0 -2px; font-size: 11px; line-height: 18px; }

.watermark { position: absolute; right: 46px; bottom: 48px; display: flex; align-items: center; gap: 3px; color: #fff; font: 35px/62px "DejaVu Sans Condensed", "Liberation Sans", sans-serif; text-shadow: 0 0 2px #b8b8b8, 0 0 3px #ccc; opacity: .85; pointer-events: none; }
.watermark svg { width: 56px; height: 62px; }
</style>
